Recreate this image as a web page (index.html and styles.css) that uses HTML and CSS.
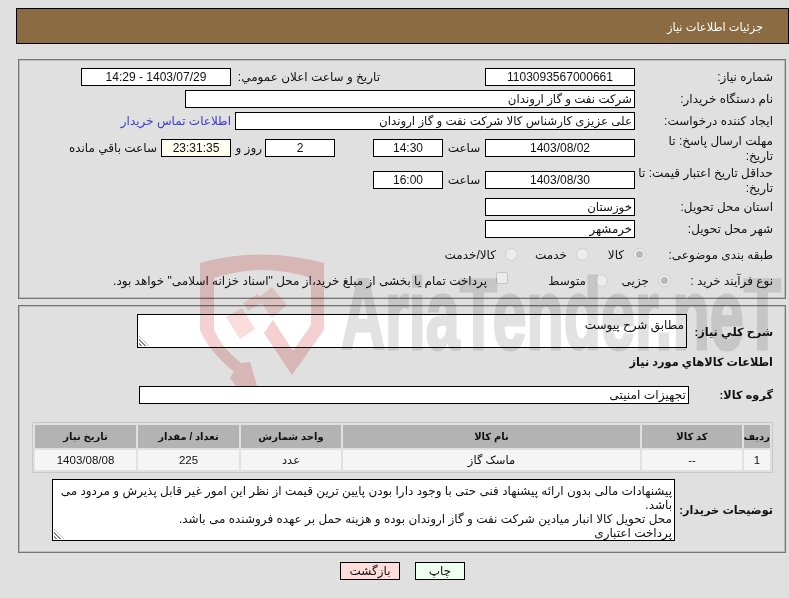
FILE: index.html
```html
<!DOCTYPE html>
<html lang="fa" dir="rtl">
<head>
<meta charset="utf-8">
<title>جزئیات اطلاعات نیاز</title>
<link rel="stylesheet" href="styles.css">
</head>
<body>
<main class="page">
  <header class="title-bar">جزئیات اطلاعات نیاز</header>

  <section class="panel info">
    <div class="row">
      <label class="lbl">شماره نیاز:</label>
      <div class="box w150 center">1103093567000661</div>
      <label class="lbl-mid">تاریخ و ساعت اعلان عمومي:</label>
      <div class="box w150 center">1403/07/29 - 14:29</div>
    </div>
    <div class="row mt4">
      <label class="lbl">نام دستگاه خریدار:</label>
      <div class="box w450">شرکت نفت و گاز اروندان</div>
    </div>
    <div class="row mt4">
      <label class="lbl">ایجاد کننده درخواست:</label>
      <div class="box w400">علی عزیزی کارشناس کالا شرکت نفت و گاز اروندان</div>
      <a class="contact" href="#">اطلاعات تماس خریدار</a>
    </div>
    <div class="row mt9">
      <label class="lbl two">مهلت ارسال پاسخ: تا<br>تاریخ:</label>
      <div class="box w150 center">1403/08/02</div>
      <span class="hour">ساعت</span>
      <div class="box w70 center">14:30</div>
      <div class="box w70 center gap-l">2</div>
      <span class="days">روز و</span>
      <div class="box w70 center cream">23:31:35</div>
      <span class="remain">ساعت باقي مانده</span>
    </div>
    <div class="row mt14">
      <label class="lbl two">حداقل تاریخ اعتبار قیمت: تا<br>تاریخ:</label>
      <div class="box w150 center">1403/08/30</div>
      <span class="hour">ساعت</span>
      <div class="box w70 center">16:00</div>
    </div>
    <div class="row mt9">
      <label class="lbl">استان محل تحویل:</label>
      <div class="box w150">خوزستان</div>
    </div>
    <div class="row mt4">
      <label class="lbl">شهر محل تحویل:</label>
      <div class="box w150">خرمشهر</div>
    </div>
    <div class="row opts mt8">
      <label class="lbl lbl-cat">طبقه بندی موضوعی:</label>
      <span class="opt cat1"><i class="radio on"></i>کالا</span>
      <span class="opt cat2"><i class="radio"></i>خدمت</span>
      <span class="opt"><i class="radio"></i>کالا/خدمت</span>
    </div>
    <div class="row opts mt8">
      <label class="lbl lbl-proc">نوع فرآیند خرید :</label>
      <span class="opt proc1"><i class="radio on"></i>جزیی</span>
      <span class="opt proc2"><i class="radio"></i>متوسط</span>
      <span class="opt"><i class="check"></i>پرداخت تمام یا بخشی از مبلغ خرید،از محل "اسناد خزانه اسلامی" خواهد بود.</span>
    </div>
  </section>

  <section class="panel goods">
    <div class="desc-row">
      <label class="lbl-b desc-lbl">شرح کلي نیاز:</label>
      <div class="area summary">مطابق شرح پیوست<i class="grip"></i></div>
    </div>
    <h2 class="subhead">اطلاعات کالاهاي مورد نیاز</h2>
    <div class="group-row">
      <label class="lbl-b group-lbl">گروه کالا:</label>
      <div class="box w550">تجهیزات امنیتی</div>
    </div>
    <table class="items">
      <thead>
        <tr><th class="c1">ردیف</th><th class="c2">کد کالا</th><th class="c3">نام کالا</th><th class="c4">واحد شمارش</th><th class="c5">تعداد / مقدار</th><th class="c6">تاریخ نیاز</th></tr>
      </thead>
      <tbody>
        <tr><td>1</td><td>--</td><td>ماسک گاز</td><td>عدد</td><td>225</td><td>1403/08/08</td></tr>
      </tbody>
    </table>
    <div class="notes-row">
      <label class="lbl-b notes-lbl">توضیحات خریدار:</label>
      <div class="area notes">پیشنهادات مالی بدون ارائه پیشنهاد فنی حتی با وجود دارا بودن پایین ترین قیمت از نظر این امور غیر قابل پذیرش و مردود می باشد.<br>محل تحویل کالا انبار میادین شرکت نفت و گاز اروندان بوده و هزینه حمل بر عهده فروشنده می باشد.<br>پرداخت اعتباری<i class="grip"></i></div>
    </div>
  </section>

  <div class="actions">
    <button class="btn print" type="button">چاپ</button>
    <button class="btn back" type="button">بازگشت</button>
  </div>
</main>
<svg class="watermark" width="789" height="598" viewBox="0 0 789 598" aria-hidden="true">
  <g fill="#f5d0d0">
    <path d="M200 263 Q262 246 324 263 V330 L292 375 L264 333 L273 320 L293 351 L311 325 V278 Q262 262 214 278 V330 Q222 348 241 363 L250 362 L257 386 H236 L230 378 L234 372 Q208 350 200 330 Z"/>
  </g>
  <g fill="#fbdcdc">
    <path d="M226 317 L242 308 L255 329 L240 339 Z"/>
    <path d="M243 303 L258 294 L263 302 L248 311 Z"/>
    <path d="M258 298 L272 287 L287 305 L272 318 Z"/>
  </g>
  <text class="wm-text" x="341" y="349" textLength="440" lengthAdjust="spacingAndGlyphs" direction="ltr">AriaTender.neT</text>
</svg>
</body>
</html>
```
FILE: styles.css
```css
* { box-sizing: border-box; }
html, body { margin: 0; padding: 0; }
body {
  width: 789px; height: 598px; overflow: hidden;
  background: #e0e0e0; color: #111;
  font: 12px/15px "Liberation Sans", "DejaVu Sans", sans-serif;
  position: relative;
}
.watermark { position: absolute; left: 0; top: 0; pointer-events: none; mix-blend-mode: multiply; }
.wm-text { font: bold 100px "Liberation Sans", sans-serif; fill: #e2e2e2; stroke: #e2e2e2; stroke-width: 3px; }
.page { padding: 8px 0 0 16px; }
.title-bar {
  height: 36px; background: #8b6b41; border: 1px solid #000;
  color: #fff; padding: 11px 25px 0 0; font-size: 11.4px;
}
.panel { border: 1px solid #757575; box-shadow: inset 0 0 0 1px #bdbdbd; margin: 0 3px 0 2px; }
.info { margin-top: 15px; height: 240px; padding: 8px 12px 0 0; }
.goods { margin-top: 6px; height: 248px; padding: 8px 1px 0 0; }
.row { display: flex; align-items: center; height: 18px; }
.mt4 { margin-top: 4px; }
.mt8 { margin-top: 8px; }
.mt9 { margin-top: 9px; }
.mt14 { margin-top: 14px; }
.lbl { width: 138px; flex: none; white-space: nowrap; }
.two { line-height: 14.5px; padding-top: 1px; }
.lbl-cat { width: 127px; }
.lbl-proc { width: 102px; }
.box {
  height: 18px; background: #fff; border: 1px solid #000; flex: none;
  padding: 0 2px; line-height: 16px; font-size: 11.8px; white-space: nowrap; overflow: hidden;
}
.center { text-align: center; font-size: 12px; }
.cream { background: #fffff2; }
.w150 { width: 150px; }
.w70 { width: 70px; }
.w400 { width: 400px; }
.w450 { width: 450px; }
.w550 { width: 550px; font-size: 12.2px; }
.lbl-mid { width: 254px; padding-right: 105px; flex: none; }
.contact { color: #3c3ccc; text-decoration: none; margin-right: 4px; white-space: nowrap; }
.hour { width: 42px; text-align: center; flex: none; white-space: nowrap; }
.gap-l { margin-right: 38px; }
.days { width: 34px; padding-right: 3px; flex: none; white-space: nowrap; }
.remain { margin-right: 4px; white-space: nowrap; }
.opts { white-space: nowrap; }
.opt { display: flex; align-items: center; gap: 9px; flex: none; }
.cat1 { width: 57px; }
.cat2 { width: 71px; }
.proc1 { width: 63px; }
.proc2 { width: 100px; }
.radio {
  width: 13px; height: 13px; border-radius: 50%; background: #ececec;
  border: 1px solid #cfcfcf; position: relative; flex: none; margin-top: -2px;
}
.radio.on::after { content: ""; position: absolute; inset: 2px; border-radius: 50%; background: #b8b8b8; }
.check { width: 12px; height: 12px; background: #ececec; border: 1px solid #c4c4c4; border-radius: 2px; flex: none; margin-top: -6px; }
.lbl-b { font-weight: bold; font-size: 11.3px; flex: none; white-space: nowrap; padding-right: 11px; }
.desc-row { display: flex; align-items: center; height: 34px; }
.desc-lbl { width: 97px; padding-top: 2px; }
.area { background: #fff; border: 1px solid #000; position: relative; flex: none; }
.summary { width: 550px; height: 34px; padding: 3px 2px 0; }
.grip {
  position: absolute; left: 1px; bottom: 1px; width: 10px; height: 10px;
  background: repeating-linear-gradient(45deg, #fff 0 1.4px, #888 1.4px 2.8px);
  clip-path: polygon(0 0, 100% 100%, 0 100%);
}
.subhead { font-size: 11.3px; line-height: 16px; margin: 6px 11px 0 0; font-weight: bold; }
.group-row { display: flex; align-items: center; height: 18px; margin-top: 16px; }
.group-lbl { width: 95px; }
.items {
  margin: 18px 11px 0 0; width: 741px; border-collapse: separate; border-spacing: 2px;
  border: 1px solid #c8c8c8; table-layout: fixed; text-align: center;
}
.items th { background: #b3b3b3; height: 23px; font-weight: bold; font-size: 10px; padding: 0; }
.items td { background: #f5f5f5; height: 20px; padding: 0; font-size: 11.5px; }
.c1 { width: 26px; } .c2 { width: 100px; } .c3 { width: 297px; } .c4 { width: 100px; } .c5 { width: 101px; } .c6 { width: 101px; }
.notes-row { display: flex; align-items: center; margin-top: 6px; }
.notes-lbl { width: 109px; }
.notes { width: 623px; height: 62px; padding: 4px 2px 0 4px; line-height: 14px; font-size: 12px; overflow: hidden; }
.actions { display: flex; gap: 15px; justify-content: center; margin-top: 9px; }
.btn { height: 18px; font: 12px/14px "DejaVu Sans", sans-serif; border: 1px solid #000; padding: 0; color: #111; }
.print { width: 50px; background: #efffef; }
.back { width: 60px; background: #ffdddd; }
```
